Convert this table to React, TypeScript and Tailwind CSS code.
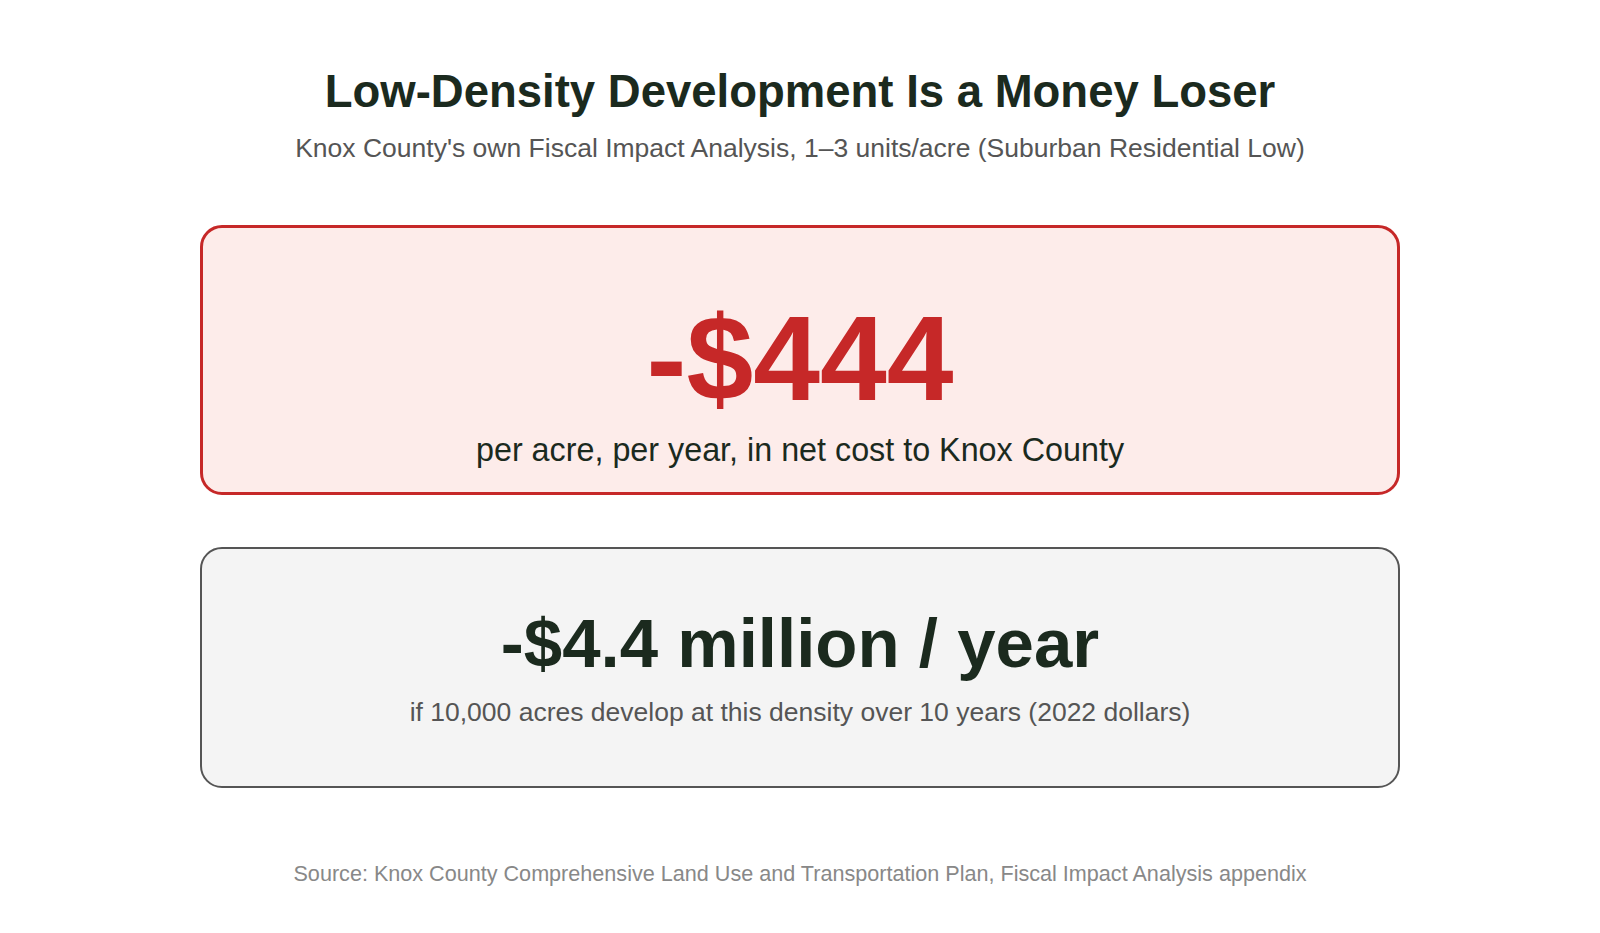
export default function App() {
  return (
    <div className="min-h-screen bg-white font-['Liberation_Sans',Arial,sans-serif]">
      <div className="mx-auto flex w-[1200px] flex-col items-center pt-[69px]">
        <h1 className="text-[45.5px] font-bold leading-none text-[#1b2a1e]">
          Low-Density Development Is a Money Loser
        </h1>
        <p className="mt-[20px] text-[26.5px] leading-none text-[#555555]">
          Knox County's own Fiscal Impact Analysis, 1–3 units/acre (Suburban Residential Low)
        </p>

        <div className="mt-[64px] flex h-[270px] w-full flex-col items-center rounded-[22px] border-[3px] border-[#c62828] bg-[#fdecea] pt-[70px]">
          <div className="text-[120px] font-bold leading-none text-[#c62828]">-$444</div>
          <div className="mt-[14px] text-[32.3px] leading-[36px] text-[#1b2a1e]">
            per acre, per year, in net cost to Knox County
          </div>
        </div>

        <div className="mt-[52px] flex h-[241px] w-full flex-col items-center rounded-[22px] border-2 border-[#555555] bg-[#f4f4f4] pt-[60px]">
          <div className="text-[69px] font-bold leading-none text-[#1b2a1e]">-$4.4 million / year</div>
          <div className="mt-[19px] text-[26.5px] leading-[30px] text-[#555555]">
            if 10,000 acres develop at this density over 10 years (2022 dollars)
          </div>
        </div>

        <p className="mt-[75px] text-[21.6px] leading-none text-[#888888]">
          Source: Knox County Comprehensive Land Use and Transportation Plan, Fiscal Impact Analysis appendix
        </p>
      </div>
    </div>
  );
}
